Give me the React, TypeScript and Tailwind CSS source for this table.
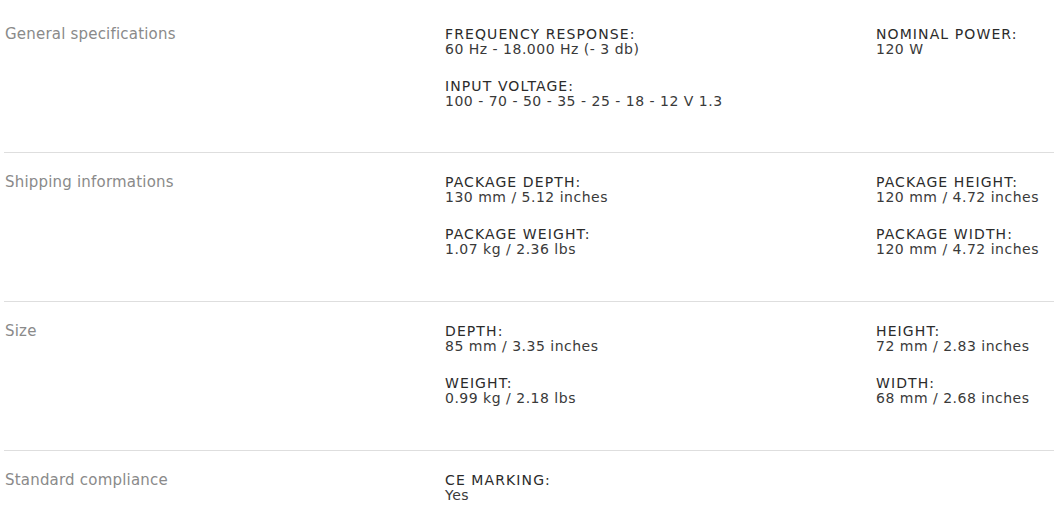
const sections = [
  {
    label: 'General specifications',
    left: [
      { title: 'FREQUENCY RESPONSE:', value: '60 Hz - 18.000 Hz (- 3 db)' },
      { title: 'INPUT VOLTAGE:', value: '100 - 70 - 50 - 35 - 25 - 18 - 12 V 1.3' },
    ],
    right: [{ title: 'NOMINAL POWER:', value: '120 W' }],
  },
  {
    label: 'Shipping informations',
    left: [
      { title: 'PACKAGE DEPTH:', value: '130 mm / 5.12 inches' },
      { title: 'PACKAGE WEIGHT:', value: '1.07 kg / 2.36 lbs' },
    ],
    right: [
      { title: 'PACKAGE HEIGHT:', value: '120 mm / 4.72 inches' },
      { title: 'PACKAGE WIDTH:', value: '120 mm / 4.72 inches' },
    ],
  },
  {
    label: 'Size',
    left: [
      { title: 'DEPTH:', value: '85 mm / 3.35 inches' },
      { title: 'WEIGHT:', value: '0.99 kg / 2.18 lbs' },
    ],
    right: [
      { title: 'HEIGHT:', value: '72 mm / 2.83 inches' },
      { title: 'WIDTH:', value: '68 mm / 2.68 inches' },
    ],
  },
  {
    label: 'Standard compliance',
    left: [{ title: 'CE MARKING:', value: 'Yes' }],
    right: [],
  },
];

type Spec = { title: string; value: string };

function SpecList({ items }: { items: Spec[] }) {
  return (
    <div className="flex flex-col gap-[22px]">
      {items.map(item => (
        <div key={item.title} className="text-[14px] leading-[15px]">
          <div className="tracking-[1.1px] text-[#2b2b2b]">{item.title}</div>
          <div className="tracking-[0.5px] text-[#3a3a3a]">{item.value}</div>
        </div>
      ))}
    </div>
  );
}

export default function App() {
  return (
    <div className="h-screen overflow-hidden bg-white pl-[4px] font-['DejaVu_Sans',sans-serif]">
      {sections.map((section, i) => (
        <div
          key={section.label}
          className={`flex ${i > 0 ? 'h-[149px] border-t border-[#dedede] pt-[22px]' : 'h-[152px] pt-[27px]'}`}
        >
          <div className="w-[441px] shrink-0 pl-[1px] text-[15px] leading-[15px] tracking-[0.2px] text-[#8a8a8a]">
            {section.label}
          </div>
          <div className="w-[431px] shrink-0">
            <SpecList items={section.left} />
          </div>
          <div className="flex-1">
            <SpecList items={section.right} />
          </div>
        </div>
      ))}
    </div>
  );
}
